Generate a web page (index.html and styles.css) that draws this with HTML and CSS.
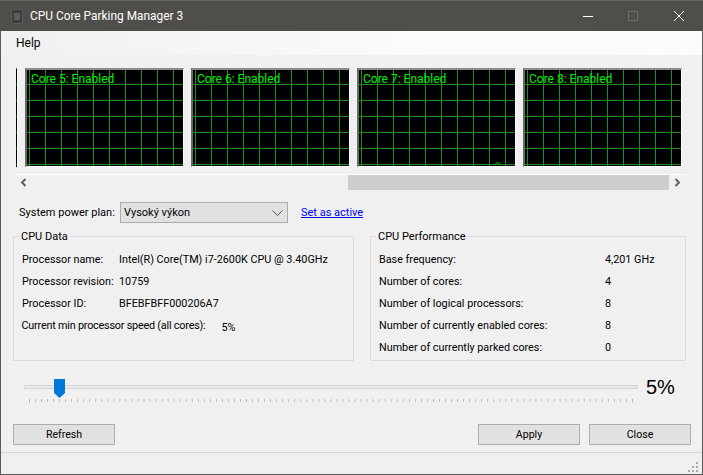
FILE: index.html
```html
<!DOCTYPE html>
<html lang="en">
<head>
<meta charset="utf-8">
<title>CPU Core Parking Manager 3</title>
<link rel="stylesheet" href="styles.css">
</head>
<body>
<div class="window">
  <header class="titlebar">
    <svg class="app-icon" width="12" height="15" viewBox="0 0 12 15"><rect x=".5" y=".5" width="11" height="14" rx="1" fill="#3f3e3c" stroke="#5d5c5a"/><rect x="3" y="4" width="6" height="7" fill="#5f5e5b"/></svg>
    <span class="title">CPU Core Parking Manager 3</span>
    <div class="caption">
      <svg width="46" height="30" viewBox="0 0 46 30"><path d="M19 15.500h10" stroke="#fff" stroke-width="1"/></svg>
      <svg width="46" height="30" viewBox="0 0 46 30"><rect x="18.500" y="10.500" width="9" height="9" fill="none" stroke="#6f6e6b"/></svg>
      <svg width="46" height="30" viewBox="0 0 46 30"><path d="M18 10l10 10M28 10l-10 10" stroke="#fff" stroke-width="1"/></svg>
    </div>
  </header>
  <nav class="menubar"><span>Help</span></nav>
  <section class="graphs">
    <div class="graph-strip">
      <div class="graph sliver"></div>
      <div class="graph"><span>Core 5: Enabled</span></div>
      <div class="graph"><span>Core 6: Enabled</span></div>
      <div class="graph"><span>Core 7: Enabled<svg class="blip" width="7" height="4" viewBox="0 0 7 4"><path d="M.5 4l3-3 3 3" fill="none" stroke="#00e000"/></svg></span></div>
      <div class="graph"><span>Core 8: Enabled</span></div>
    </div>
    <div class="scrollbar">
      <svg width="8" height="9" viewBox="0 0 8 9"><path d="M5.500 1L2 4.500 5.500 8" fill="none" stroke="#606060" stroke-width="2"/></svg>
      <div class="track"><div class="thumb"></div></div>
      <svg width="8" height="9" viewBox="0 0 8 9"><path d="M2.500 1L6 4.500L2.500 8" fill="none" stroke="#606060" stroke-width="2"/></svg>
    </div>
  </section>
  <div class="plan">
    <label>System power plan:</label>
    <div class="select"><span>Vysoký výkon</span><svg width="11" height="6" viewBox="0 0 11 6"><path d="M.5 .5l5 5 5-5" fill="none" stroke="#555"/></svg></div>
    <a href="#">Set as active</a>
  </div>
  <div class="groups">
    <fieldset class="group data">
      <legend>CPU Data</legend>
      <div class="row"><span class="k1">Processor name:</span><span>Intel(R) Core(TM) i7-2600K CPU @ 3.40GHz</span></div>
      <div class="row"><span class="k1">Processor revision:</span><span>10759</span></div>
      <div class="row"><span class="k1">Processor ID:</span><span>BFEBFBFF000206A7</span></div>
      <div class="row"><span class="k2">Current min processor speed (all cores):</span><span class="v2">5%</span></div>
    </fieldset>
    <fieldset class="group perf">
      <legend>CPU Performance</legend>
      <div class="row"><span class="k3">Base frequency:</span><span>4,201 GHz</span></div>
      <div class="row"><span class="k3">Number of cores:</span><span>4</span></div>
      <div class="row"><span class="k3">Number of logical processors:</span><span>8</span></div>
      <div class="row"><span class="k3">Number of currently enabled cores:</span><span>8</span></div>
      <div class="row"><span class="k3">Number of currently parked cores:</span><span>0</span></div>
    </fieldset>
  </div>
  <div class="slider-row">
    <div class="slider">
      <div class="rail"></div>
      <svg class="knob" width="11" height="19" viewBox="0 0 11 19"><path d="M0 0h11v14l-5.500 5L0 14z" fill="#0078d7"/></svg>
      <svg class="ticks" width="605" height="4" viewBox="0 0 605 4" shape-rendering="crispEdges">
        <defs><pattern id="tick" width="6.030" height="4" patternUnits="userSpaceOnUse"><rect width="1" height="3" fill="#b8b8b8"/></pattern></defs>
        <rect width="605" height="4" fill="url(#tick)"/>
        <path d="M.5 0v4M603.500 0v4" stroke="#b8b8b8"/>
      </svg>
    </div>
    <div class="percent">5%</div>
  </div>
  <div class="buttons">
    <button>Refresh</button>
    <div class="spacer"></div>
    <button>Apply</button>
    <button>Close</button>
  </div>
  <footer class="statusbar">
    <svg width="12" height="12" viewBox="0 0 12 12" fill="#a8a8a8"><rect x="9" y="1" width="2" height="2"/><rect x="5" y="5" width="2" height="2"/><rect x="9" y="5" width="2" height="2"/><rect x="1" y="9" width="2" height="2"/><rect x="5" y="9" width="2" height="2"/><rect x="9" y="9" width="2" height="2"/></svg>
  </footer>
</div>
</body>
</html>
```
FILE: styles.css
```css
* { box-sizing: border-box; }
html, body { margin: 0; padding: 0; }
body { width: 703px; height: 475px; overflow: hidden; font-family: Roboto, "Noto Sans", sans-serif; font-size: 11px; color: #000; }
.window { width: 703px; height: 475px; background: #f0f0f0; border: 1px solid #5c5b59; border-top: 0; display: flex; flex-direction: column; }
.titlebar { flex: none; height: 31px; background: #4f4e4b; border-top: 1px solid #666; display: flex; align-items: center; margin: 0 -1px; padding-left: 11px; color: #fff; }
.app-icon { flex: none; }
.title { margin-left: 7px; font-size: 11.900px; }
.caption { margin-left: auto; display: flex; margin-right: 1px; }
.caption svg { display: block; }
.menubar { flex: none; height: 24px; background: linear-gradient(90deg, #f0f0f0, #fbfbfb 60%, #fcfcfc); padding: 5px 15px; font-size: 12px; line-height: 15px; }
.graphs { flex: none; height: 135px; padding: 13px 0 0 15px; }
.graph-strip { display: flex; gap: 7px; width: 670px; height: 107px; overflow: hidden; border-bottom: 1px solid #fff; }
.graph { position: relative; flex: none; width: 159px; height: 99px; border-top: 2px solid #8c8c8c; border-left: 2px solid #696969; border-right: 1px solid #fff; border-bottom: 1px solid #fff;
  background-color: #000;
  background-image: linear-gradient(#228b22 1px, transparent 1px), linear-gradient(90deg, #228b22 1px, transparent 1px);
  background-size: 16px 16px; background-position: 0 14px, 2px 0; color: #00f000; font-size: 12px; line-height: 16px; padding: 1px 0 0 4px; }
.graph.sliver { width: 2px; margin-right: 0; border: 0; border-right: 1px solid #fff; padding: 0; background-image: linear-gradient(#228b22 1px, transparent 1px); background-size: 16px 16px; background-position: 0 16px; }
.blip { position: absolute; left: 135px; bottom: 1px; }
.scrollbar { height: 15px; display: flex; align-items: center; margin-left: 4px; width: 661px; }
.scrollbar svg { flex: none; }
.track { flex: 1; height: 15px; padding-left: 316px; margin: 0 4px; }
.thumb { height: 15px; background: #cdcdcd; }
.plan { flex: none; height: 21px; display: flex; align-items: center; padding-left: 18px; margin-top: 12px; }
.plan label { width: 101px; flex: none; white-space: nowrap; }
.select { width: 168px; height: 21px; background: #e1e1e1; border: 1px solid #adadad; display: flex; align-items: center; justify-content: space-between; padding: 0 4px 0 3px; }
.select svg { flex: none; }
.plan a { margin-left: 13px; color: #0000ff; text-decoration: underline; }
.groups { flex: none; display: flex; gap: 16px; padding: 0 0 0 12px; margin-top: 7px; }
.group { margin: 0; min-width: 0; border: 1px solid #dcdcdc; height: 131px; }
.group legend { padding: 0 2px; margin-left: -3px; line-height: 13px; }
.data { width: 341px; padding: 5px 0 0 8px; }
.perf { width: 316px; padding: 5px 0 0 8px; }
.row { height: 22.200px; display: flex; align-items: center; white-space: nowrap; font-size: 10.800px; }
.k1 { width: 97px; flex: none; }
.k2 { width: 200px; flex: none; letter-spacing: -.2px; margin-left: -.5px; }
.k3 { width: 226px; flex: none; }
.v2 { padding-top: 3px; }
.slider-row { flex: none; display: flex; height: 45px; padding-left: 23px; margin-top: 18px; }
.slider { position: relative; flex: none; width: 614px; height: 30px; }
.rail { position: absolute; left: 0; right: 0; top: 6px; height: 4px; background: #e7eaea; border: 1px solid #d6d6d6; }
.knob { position: absolute; left: 30px; top: 0; }
.ticks { position: absolute; left: 5px; top: 20px; display: block; }
.percent { margin-left: 8px; margin-top: -3px; font-family: "Liberation Sans", Arial, sans-serif; font-size: 20px; line-height: 23px; }
.buttons { flex: none; display: flex; gap: 9px; padding: 0 11px 0 12px; }
.spacer { flex: 1; }
button { width: 102px; height: 21px; background: #e1e1e1; border: 1px solid #adadad; font: inherit; font-size: 10.600px; padding: 0; color: #000; }
.statusbar { margin-top: auto; height: 22px; border-top: 1px solid #d7d7d7; display: flex; justify-content: flex-end; align-items: flex-end; padding: 0 3px 1px 0; }
```
